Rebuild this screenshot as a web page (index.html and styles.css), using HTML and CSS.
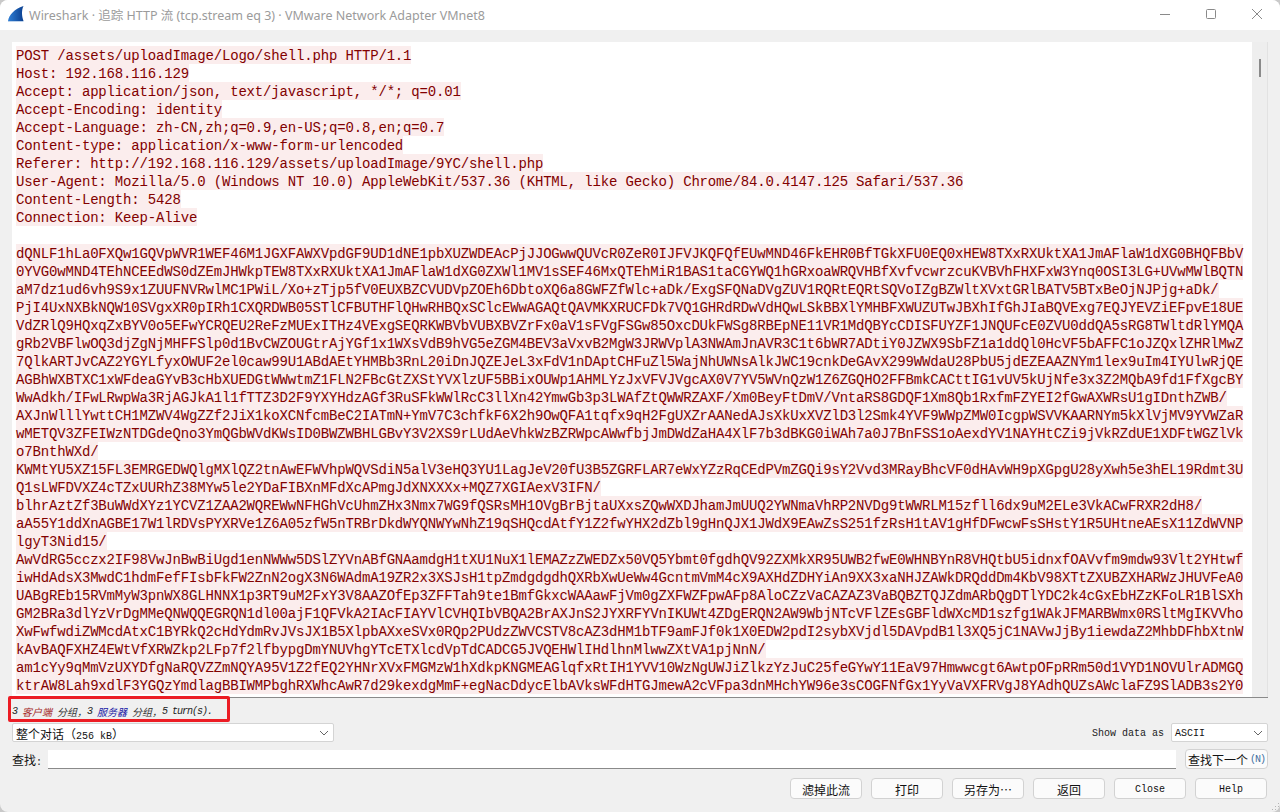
FILE: index.html
```html
<!DOCTYPE html>
<html lang="zh">
<head>
<meta charset="utf-8">
<title>Wireshark · 追踪 HTTP 流</title>
<link rel="stylesheet" href="styles.css">
</head>
<body>
<div class="window">
  <header class="titlebar">
    <svg class="logo" viewBox="0 0 16 16" width="16" height="16"><defs><linearGradient id="fin" x1="0" y1="0" x2="1" y2="0"><stop offset="0" stop-color="#2f7fd6"/><stop offset="1" stop-color="#0b3f8f"/></linearGradient></defs><path d="M0 15 C1 9 6 3 15.500 0 C13.500 4 13.500 10 15.500 15 Z" fill="url(#fin)"/><path d="M0 15H15.500V15.800H0Z" fill="#a9c4e6"/></svg>
    <span class="title">Wireshark · 追踪 HTTP 流 (tcp.stream eq 3) · VMware Network Adapter VMnet8</span>
    <div class="controls">
      <svg viewBox="0 0 12 12" width="12" height="12"><path d="M1 6.500H11" stroke="#8a8a8a" fill="none"/></svg>
      <svg viewBox="0 0 12 12" width="12" height="12"><rect x="1.500" y="1.500" width="9" height="9" rx="1" stroke="#8a8a8a" fill="none"/></svg>
      <svg viewBox="0 0 12 12" width="12" height="12"><path d="M1 1L11 11M11 1L1 11" stroke="#8a8a8a" fill="none"/></svg>
    </div>
  </header>
  <main class="body">
    <section class="stream">
      <div class="text">
        <div><span>POST /assets/uploadImage/Logo/shell.php HTTP/1.1</span></div>
        <div><span>Host: 192.168.116.129</span></div>
        <div><span>Accept: application/json, text/javascript, */*; q=0.01</span></div>
        <div><span>Accept-Encoding: identity</span></div>
        <div><span>Accept-Language: zh-CN,zh;q=0.9,en-US;q=0.8,en;q=0.7</span></div>
        <div><span>Content-type: application/x-www-form-urlencoded</span></div>
        <div><span>Referer: http://192.168.116.129/assets/uploadImage/9YC/shell.php</span></div>
        <div><span>User-Agent: Mozilla/5.0 (Windows NT 10.0) AppleWebKit/537.36 (KHTML, like Gecko) Chrome/84.0.4147.125 Safari/537.36</span></div>
        <div><span>Content-Length: 5428</span></div>
        <div><span>Connection: Keep-Alive</span></div>
        <div class="blank"></div>
        <div><span>dQNLF1hLa0FXQw1GQVpWVR1WEF46M1JGXFAWXVpdGF9UD1dNE1pbXUZWDEAcPjJJOGwwQUVcR0ZeR0IJFVJKQFQfEUwMND46FkEHR0BfTGkXFU0EQ0xHEW8TXxRXUktXA1JmAFlaW1dXG0BHQFBbV</span></div>
        <div><span>0YVG0wMND4TEhNCEEdWS0dZEmJHWkpTEW8TXxRXUktXA1JmAFlaW1dXG0ZXWl1MV1sSEF46MxQTEhMiR1BAS1taCGYWQ1hGRxoaWRQVHBfXvfvcwrzcuKVBVhFHXFxW3Ynq0OSI3LG+UVwMWlBQTN</span></div>
        <div><span>aM7dz1ud6vh9S9x1ZUUFNVRwlMC1PWiL/Xo+zTjp5fV0EUXBZCVUDVpZOEh6DbtoXQ6a8GWFZfWlc+aDk/ExgSFQNaDVgZUV1RQRtEQRtSQVoIZgBZWltXVxtGRlBATV5BTxBeOjNJPjg+aDk/</span></div>
        <div><span>PjI4UxNXBkNQW10SVgxXR0pIRh1CXQRDWB05STlCFBUTHFlQHwRHBQxSClcEWwAGAQtQAVMKXRUCFDk7VQ1GHRdRDwVdHQwLSkBBXlYMHBFXWUZUTwJBXhIfGhJIaBQVExg7EQJYEVZiEFpvE18UE</span></div>
        <div><span>VdZRlQ9HQxqZxBYV0o5EFwYCRQEU2ReFzMUExITHz4VExgSEQRKWBVbVUBXBVZrFx0aV1sFVgFSGw85OxcDUkFWSg8RBEpNE11VR1MdQBYcCDISFUYZF1JNQUFcE0ZVU0ddQA5sRG8TWltdRlYMQA</span></div>
        <div><span>gRb2VBFlwOQ3djZgNjMHFFSlp0d1BvCWZOUGtrAjYGf1x1WXsVdB9hVG5eZGM4BEV3aVxvB2MgW3JRWVplA3NWAmJnAVR3C1t6bWR7ADtiY0JZWX9SbFZ1a1ddQl0HcVF5bAFFC1oJZQxlZHRlMwZ</span></div>
        <div><span>7QlkARTJvCAZ2YGYLfyxOWUF2el0caw99U1ABdAEtYHMBb3RnL20iDnJQZEJeL3xFdV1nDAptCHFuZl5WajNhUWNsAlkJWC19cnkDeGAvX299WWdaU28PbU5jdEZEAAZNYm1lex9uIm4IYUlwRjQE</span></div>
        <div><span>AGBhWXBTXC1xWFdeaGYvB3cHbXUEDGtWWwtmZ1FLN2FBcGtZXStYVXlzUF5BBixOUWp1AHMLYzJxVFVJVgcAX0V7YV5WVnQzW1Z6ZGQHO2FFBmkCACttIG1vUV5kUjNfe3x3Z2MQbA9fd1FfXgcBY</span></div>
        <div><span>WwAdkh/IFwLRwpWa3RjAGJkA1l1fTTZ3D2F9YXYHdzAGf3RuSFkWWlRcC3llXn42YmwGb3p3LWAfZtQWWRZAXF/Xm0BeyFtDmV/VntaRS8GDQF1Xm8Qb1RxfmFZYEI2fGwAXWRsU1gIDnthZWB/</span></div>
        <div><span>AXJnWlllYwttCH1MZWV4WgZZf2JiX1koXCNfcmBeC2IATmN+YmV7C3chfkF6X2h9OwQFA1tqfx9qH2FgUXZrAANedAJsXkUxXVZlD3l2Smk4YVF9WWpZMW0IcgpWSVVKAARNYm5kXlVjMV9YVWZaR</span></div>
        <div><span>wMETQV3ZFEIWzNTDGdeQno3YmQGbWVdKWsID0BWZWBHLGBvY3V2XS9rLUdAeVhkWzBZRWpcAWwfbjJmDWdZaHA4XlF7b3dBKG0iWAh7a0J7BnFSS1oAexdYV1NAYHtCZi9jVkRZdUE1XDFtWGZlVk</span></div>
        <div><span>o7BnthWXd/</span></div>
        <div><span>KWMtYU5XZ15FL3EMRGEDWQlgMXlQZ2tnAwEFWVhpWQVSdiN5alV3eHQ3YU1LagJeV20fU3B5ZGRFLAR7eWxYZzRqCEdPVmZGQi9sY2Vvd3MRayBhcVF0dHAvWH9pXGpgU28yXwh5e3hEL19Rdmt3U</span></div>
        <div><span>Q1sLWFDVXZ4cTZxUURhZ38MYw5le2YDaFIBXnMFdXcAPmgJdXNXXXx+MQZ7XGIAexV3IFN/</span></div>
        <div><span>blhrAztZf3BuWWdXYz1YCVZ1ZAA2WQREWwNFHGhVcUhmZHx3Nmx7WG9fQSRsMH1OVgBrBjtaUXxsZQwWXDJhamJmUUQ2YWNmaVhRP2NVDg9tWWRLM15zfll6dx9uM2ELe3VkACwFRXR2dH8/</span></div>
        <div><span>aA55Y1ddXnAGBE17W1lRDVsPYXRVe1Z6A05zfW5nTRBrDkdWYQNWYwNhZ19qSHQcdAtfY1Z2fwYHX2dZbl9gHnQJX1JWdX9EAwZsS251fzRsH1tAV1gHfDFwcwFsSHstY1R5UHtneAEsX11ZdWVNP</span></div>
        <div><span>lgyT3Nid15/</span></div>
        <div><span>AwVdRG5cczx2IF98VwJnBwBiUgd1enNWWw5DSlZYVnABfGNAamdgH1tXU1NuX1lEMAZzZWEDZx50VQ5Ybmt0fgdhQV92ZXMkXR95UWB2fwE0WHNBYnR8VHQtbU5idnxfOAVvfm9mdw93Vlt2YHtwf</span></div>
        <div><span>iwHdAdsX3MwdC1hdmFefFIsbFkFW2ZnN2ogX3N6WAdmA19ZR2x3XSJsH1tpZmdgdgdhQXRbXwUeWw4GcntmVmM4cX9AXHdZDHYiAn9XX3xaNHJZAWkDRQddDm4KbV98XTtZXUBZXHARWzJHUVFeA0</span></div>
        <div><span>UABgREb15RVmMyW3pnWX8GLHNNX1p3RT9uM2FxY3V8AAZOfEp3ZFFTah9te1BmfGkxcWAAawFjVm0gZXFWZFpwAFp8AloCZzVaCAZAZ3VaBQBZTQJZdmARbQgDTlYDC2k4cGxEbHZzKFoLR1BlSXh</span></div>
        <div><span>GM2BRa3dlYzVrDgMMeQNWQQEGRQN1dl00ajF1QFVkA2IAcFIAYVlCVHQIbVBQA2BrAXJnS2JYXRFYVnIKUWt4ZDgERQN2AW9WbjNTcVFlZEsGBFldWXcMD1szfg1WAkJFMARBWmx0RSltMgIKVVho</span></div>
        <div><span>XwFwfwdiZWMcdAtxC1BYRkQ2cHdYdmRvJVsJX1B5XlpbAXxeSVx0RQp2PUdzZWVCSTV8cAZ3dHM1bTF9amFJf0k1X0EDW2pdI2sybXVjdl5DAVpdB1l3XQ5jC1NAVwJjBy1iewdaZ2MhbDFhbXtnW</span></div>
        <div><span>kAvBAQFXHZ4EWtVfXRWZkp2LFp7f2lfbypgDmYNUVhgYTcETXlcdVpTdCADCG5JVQEHWlIHdlhnMlwwZXtVA1pjNnN/</span></div>
        <div><span>am1cYy9qMmVzUXYDfgNaRQVZZmNQYA95V1Z2fEQ2YHNrXVxFMGMzW1hXdkpKNGMEAGlqfxRtIH1YVV10WzNgUWJiZlkzYzJuC25feGYwY11EaV97Hmwwcgt6AwtpOFpRRm50d1VYD1NOVUlrADMGQ</span></div>
        <div><span>ktrAW8Lah9xdlF3YGQzYmdlagBBIWMPbghRXWhcAwR7d29kexdgMmF+egNacDdycElbAVksWFdHTGJmewA2cVFpa3dnMHchYW96e3sCOGFNfGx1YyVaVXFRVgJ8YAdhQUZsAWclaFZ9SlADB3s2Y0</span></div>
      </div>
      <div class="scrollbar"><div class="thumb"></div></div>
    </section>
    <div class="status"><span>3 </span><span class="cjk client">客户端</span><span> </span><span class="cjk">分组，</span><span>3 </span><span class="cjk server">服务器</span><span> </span><span class="cjk">分组，</span><span>5 turn(s).</span></div>
    <div class="row mode-row">
      <div class="select wide"><span><span class="cjk">整个对话（</span>256 kB<span class="cjk">）</span></span><svg viewBox="0 0 10 6" width="10" height="6"><path d="M1 1L5 5L9 1" stroke="#666" fill="none"/></svg></div>
      <div class="show">
        <span class="mono-label">Show data as</span>
        <div class="select narrow"><span>ASCII</span><svg viewBox="0 0 10 6" width="10" height="6"><path d="M1 1L5 5L9 1" stroke="#666" fill="none"/></svg></div>
      </div>
    </div>
    <div class="row find-row">
      <span class="find-label"><span class="cjk">查找</span>:</span>
      <div class="input"></div>
      <div class="btn next"><span class="cjk">查找下一个</span><span class="hotkey">(N)</span></div>
    </div>
    <div class="row actions">
      <div class="btn"><span class="cjk">滤掉此流</span></div>
      <div class="btn"><span class="cjk">打印</span></div>
      <div class="btn"><span class="cjk">另存为⋯</span></div>
      <div class="btn"><span class="cjk">返回</span></div>
      <div class="btn">Close</div>
      <div class="btn">Help</div>
    </div>
  </main>
  <div class="annotation"></div>
  <svg class="grip" viewBox="0 0 10 10" width="10" height="10"><path d="M8 2h1v1H8zM5 5h1v1H5zM8 5h1v1H8zM2 8h1v1H2zM5 8h1v1H5zM8 8h1v1H8z" fill="#b5b5b5"/></svg>
</div>
</body>
</html>
```
FILE: styles.css
```css
* { box-sizing: border-box; }
html, body { margin: 0; height: 100%; background: #c9c9c9; }
.window {
  position: relative;
  width: 1280px;
  height: 812px;
  display: flex;
  flex-direction: column;
  background: #f0f0f0;
  border-radius: 8px;
  overflow: hidden;
  font-family: "Liberation Mono", "Noto Sans CJK SC", monospace;
}
.cjk {
  font-family: "Noto Sans CJK SC", sans-serif;
  font-size: 12px;
  letter-spacing: 0;
  color: #111;
}
.titlebar {
  height: 30px;
  flex: none;
  background: #fff;
  display: flex;
  align-items: center;
  padding-left: 8px;
}
.logo { margin-right: 5px; margin-top: -2px; }
.title {
  font: 12.5px "Noto Sans", "Noto Sans CJK SC", sans-serif;
  color: #9b9b9b;
  flex: 1;
  white-space: nowrap;
  margin-top: -2px;
}
.controls {
  display: flex;
  gap: 34px;
  padding-right: 17px;
  align-items: center;
  margin-top: -2px;
}
.body {
  flex: 1;
  display: flex;
  flex-direction: column;
  padding: 12px 12px 0;
}
.stream {
  height: 656px;
  flex: none;
  display: flex;
  border-bottom: 1px solid #8a8a8a;
  overflow: hidden;
}
.text {
  flex: 1;
  background: #fff;
  padding: 4px 0 0 4px;
  overflow: hidden;
  font: 14px/18px "Liberation Mono", monospace;
  letter-spacing: -0.165px;
  color: #820000;
}
.text div { height: 18px; }
.text span {
  background: #fbeded;
  display: inline-block;
  height: 18px;
  line-height: 20px;
  white-space: pre;
  vertical-align: top;
}
.scrollbar {
  width: 16px;
  flex: none;
  background: #eeeeee;
  border-right: 1px solid #e2e2e2;
  padding: 17px 0 0 7px;
}
.thumb { width: 2px; height: 18px; background: #8a8a8a; }
.status {
  height: 25px;
  flex: none;
  display: flex;
  align-items: center;
  font: italic 10px "Liberation Mono", monospace;
  letter-spacing: -1px;
  color: #222;
  white-space: pre;
  padding-top: 1px;
}
.status .cjk { font-size: 10px; color: #333; }
.status .client { color: #a52a2a; }
.status .server { color: #1a1aa6; }
.row { display: flex; align-items: center; flex: none; }
.mode-row { height: 19px; justify-content: space-between; }
.select {
  height: 19px;
  background: #fff;
  border: 1px solid #d4d4d4;
  border-radius: 2px;
  display: flex;
  align-items: center;
  justify-content: space-between;
  padding: 1px 4px 0 3px;
  font-size: 10px;
  color: #111;
}
.wide { width: 322px; }
.narrow { width: 97px; }
.show { display: flex; align-items: center; gap: 7px; }
.mono-label { font-size: 10px; color: #222; padding-top: 1px; }
.find-row { height: 20px; margin-top: 7px; }
.find-label { width: 36px; font-size: 10px; color: #222; white-space: nowrap; }
.input {
  flex: 1;
  height: 19px;
  background: #fff;
  border-bottom: 1px solid #8a8a8a;
}
.btn {
  width: 72px;
  height: 21px;
  border: 1px solid #d2d2d2;
  border-radius: 4px;
  background: #fbfbfb;
  display: flex;
  align-items: center;
  justify-content: center;
  font-size: 10px;
  color: #111;
  padding-top: 1px;
}
.next { width: 83px; height: 20px; margin-left: 9px; white-space: nowrap; }
.hotkey { letter-spacing: -1px; color: #3f6f9f; margin-left: 2px; }
.actions { justify-content: flex-end; gap: 9px; margin-top: 9px; padding-right: 1px; }
.annotation {
  position: absolute;
  left: 8px;
  top: 696px;
  width: 222px;
  height: 26px;
  border: 3px solid #ec1c24;
  border-radius: 2px;
}
.grip {
  position: absolute;
  right: 0;
  bottom: 1px;
}
```
